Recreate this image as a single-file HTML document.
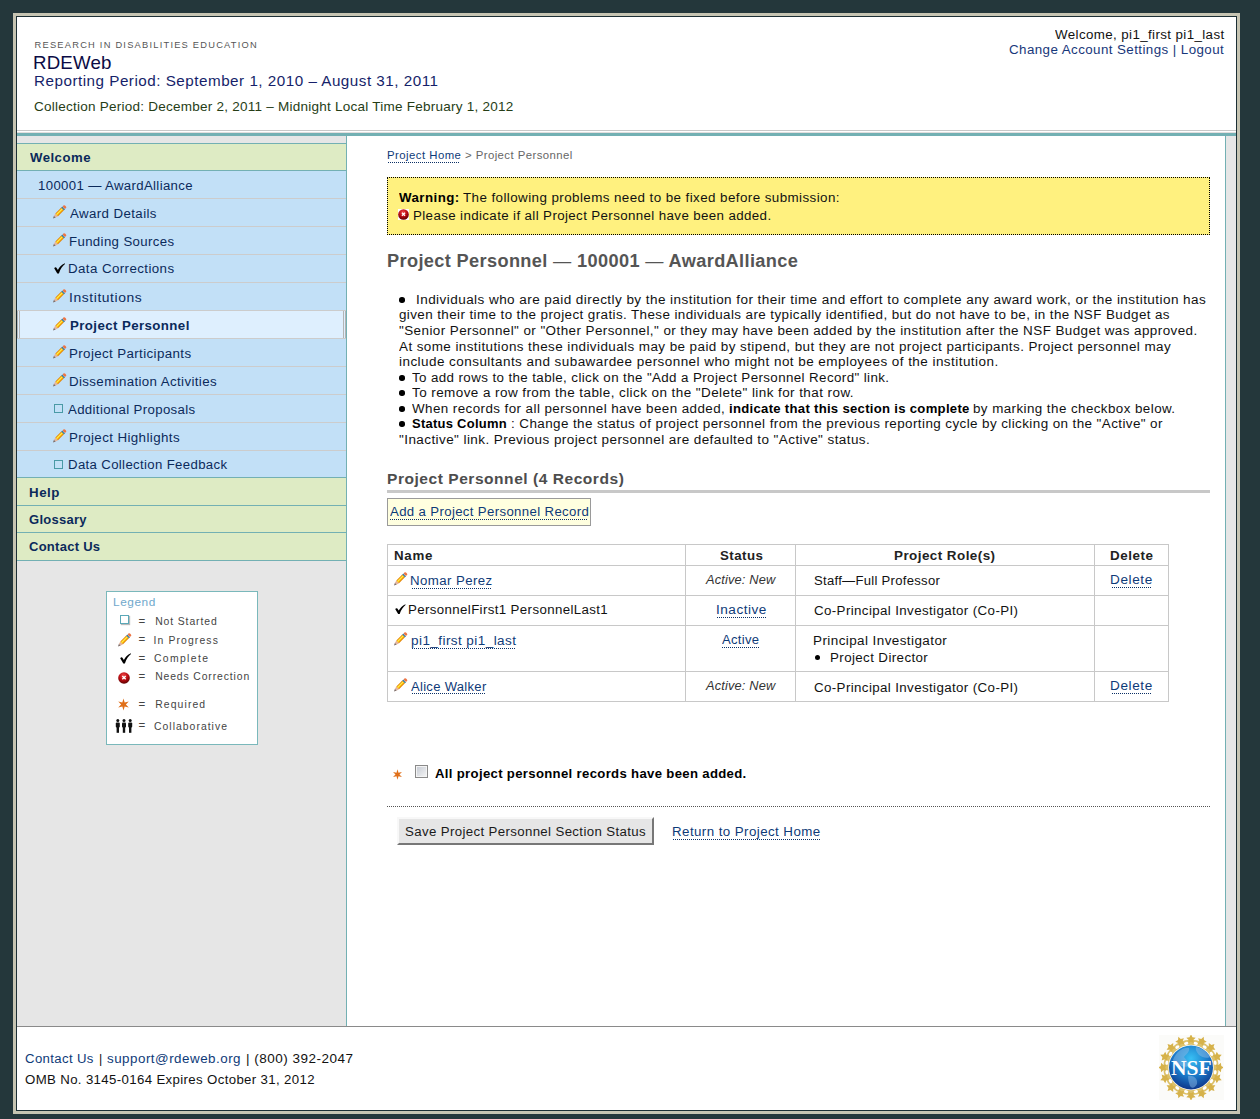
<!DOCTYPE html>
<html><head><meta charset="utf-8"><title>RDEWeb</title><style>html,body{margin:0;padding:0}
body{width:1260px;height:1119px;overflow:hidden;background:#24373b;position:relative;font-family:"Liberation Sans",sans-serif}
.a{position:absolute;box-sizing:content-box}
.t{position:absolute;white-space:nowrap;line-height:20px;transform-origin:0 0}
.ul{height:1px;background:repeating-linear-gradient(90deg,#0b3066 0 1px,transparent 1px 2px)}
</style></head><body>
<div class="a" style="left:13px;top:13px;width:1221px;height:1095px;border:3px solid #c6c4b2;box-sizing:content-box"></div>
<div class="a" style="left:16px;top:16px;width:1219px;height:1093px;border:1px solid #1c2f35;background:#fff"></div>
<div class="a" style="left:17px;top:130px;width:1219px;height:1px;background:#c8c8c8"></div>
<div class="a" style="left:17px;top:132px;width:1219px;height:1px;background:#e2dede"></div>
<div class="a" style="left:17px;top:133px;width:1219px;height:3px;background:#73b0b3"></div>
<div class="a" style="left:17px;top:136px;width:329px;height:890px;background:#e6e6e6"></div>
<div class="a" style="left:346px;top:136px;width:1px;height:890px;background:#73b0b3"></div>
<div class="a" style="left:1225px;top:136px;width:1px;height:890px;background:#73b0b3"></div>
<div class="a" style="left:1226px;top:136px;width:10px;height:890px;background:#e6e6e6"></div>
<div class="a" style="left:17px;top:143px;width:329px;height:1px;background:#73b0b3"></div>
<div class="a" style="left:17px;top:144px;width:329px;height:26px;background:#deebc4"></div>
<div class="a" style="left:17px;top:170px;width:329px;height:1px;background:#73b0b3"></div>
<div class="a" style="left:17px;top:171px;width:329px;height:306px;background:#c2e0f7"></div>
<div class="a" style="left:17px;top:198px;width:329px;height:1px;background:#cccccc"></div>
<div class="a" style="left:17px;top:226px;width:329px;height:1px;background:#cccccc"></div>
<div class="a" style="left:17px;top:254px;width:329px;height:1px;background:#cccccc"></div>
<div class="a" style="left:17px;top:282px;width:329px;height:1px;background:#cccccc"></div>
<div class="a" style="left:17px;top:310px;width:329px;height:1px;background:#cccccc"></div>
<div class="a" style="left:17px;top:338px;width:329px;height:1px;background:#cccccc"></div>
<div class="a" style="left:17px;top:366px;width:329px;height:1px;background:#cccccc"></div>
<div class="a" style="left:17px;top:394px;width:329px;height:1px;background:#cccccc"></div>
<div class="a" style="left:17px;top:422px;width:329px;height:1px;background:#cccccc"></div>
<div class="a" style="left:17px;top:450px;width:329px;height:1px;background:#cccccc"></div>
<div class="a" style="left:17px;top:477px;width:329px;height:1px;background:#73b0b3"></div>
<div class="a" style="left:17px;top:311px;width:329px;height:27px;background:#deeffe"></div>
<div class="a" style="left:17px;top:311px;width:1px;height:27px;background:#b4b4b4"></div>
<div class="a" style="left:19px;top:311px;width:1px;height:27px;background:#b4b4b4"></div>
<div class="a" style="left:343px;top:311px;width:1px;height:27px;background:#b4b4b4"></div>
<div class="a" style="left:345px;top:311px;width:1px;height:27px;background:#b4b4b4"></div>
<div class="a" style="left:17px;top:478px;width:329px;height:27px;background:#deebc4"></div>
<div class="a" style="left:17px;top:505px;width:329px;height:1px;background:#73b0b3"></div>
<div class="a" style="left:17px;top:506px;width:329px;height:26px;background:#deebc4"></div>
<div class="a" style="left:17px;top:532px;width:329px;height:1px;background:#73b0b3"></div>
<div class="a" style="left:17px;top:533px;width:329px;height:27px;background:#deebc4"></div>
<div class="a" style="left:17px;top:560px;width:329px;height:1px;background:#73b0b3"></div>
<div class="a" style="left:106px;top:591px;width:150px;height:152px;border:1px solid #7ab8bb;background:#fff"></div>
<div class="a" style="left:17px;top:1026px;width:1219px;height:1px;background:#8a8a8a"></div>
<div class="a" style="left:387px;top:177px;width:821px;height:56px;border:1px dotted #000;background:#fff17f"></div>
<div class="a" style="left:387px;top:490px;width:823px;height:3px;background:#c8c8c8"></div>
<div class="a" style="left:387px;top:498px;width:202px;height:26px;border:1px solid #9a9a9a;background:#ffffdf"></div>
<div class="a" style="left:387px;top:544px;width:782px;height:158px;border:0;background:#fff"></div>
<div class="a" style="left:387px;top:544px;width:782px;height:1px;background:#c8c8c8"></div>
<div class="a" style="left:387px;top:565px;width:782px;height:1px;background:#c8c8c8"></div>
<div class="a" style="left:387px;top:595px;width:782px;height:1px;background:#c8c8c8"></div>
<div class="a" style="left:387px;top:625px;width:782px;height:1px;background:#c8c8c8"></div>
<div class="a" style="left:387px;top:671px;width:782px;height:1px;background:#c8c8c8"></div>
<div class="a" style="left:387px;top:701px;width:782px;height:1px;background:#c8c8c8"></div>
<div class="a" style="left:387px;top:544px;width:1px;height:158px;background:#c8c8c8"></div>
<div class="a" style="left:685px;top:544px;width:1px;height:158px;background:#c8c8c8"></div>
<div class="a" style="left:795px;top:544px;width:1px;height:158px;background:#c8c8c8"></div>
<div class="a" style="left:1094px;top:544px;width:1px;height:158px;background:#c8c8c8"></div>
<div class="a" style="left:1168px;top:544px;width:1px;height:158px;background:#c8c8c8"></div>
<div class="a" style="left:387px;top:806px;width:823px;height:0px;border-top:1px dotted #555"></div>
<div class="a" style="left:397px;top:817px;width:253px;height:24px;border:2px solid;border-color:#f8f8f8 #777 #777 #f8f8f8;background:#e6e6e6"></div>
<svg class="a" style="left:51.3px;top:204.3px" width="16.5" height="16.5" viewBox="0 0 15 15"><g transform="rotate(-45 7.5 7.5)">
<polygon points="-0.6,7.5 1.9,6.3 1.9,8.7" fill="#7a6a66"/><polygon points="1.9,6.3 4.2,5.8 4.2,9.2 1.9,8.7" fill="#e6b49a"/>
<rect x="4.2" y="5.8" width="7.6" height="3.4" fill="#e2820c"/><rect x="4.2" y="6.5" width="7.6" height="1.9" fill="#ffc600"/><rect x="4.2" y="6.8" width="7.6" height="0.8" fill="#ffe95a"/>
<rect x="11.8" y="5.8" width="1.4" height="3.4" fill="#2f6f90"/><rect x="12.3" y="6.6" width="0.5" height="1.6" fill="#6fb0d0"/><rect x="13.2" y="5.8" width="2.3" height="3.4" rx="1.1" fill="#ee7444"/></g></svg>
<svg class="a" style="left:51.3px;top:232.3px" width="16.5" height="16.5" viewBox="0 0 15 15"><g transform="rotate(-45 7.5 7.5)">
<polygon points="-0.6,7.5 1.9,6.3 1.9,8.7" fill="#7a6a66"/><polygon points="1.9,6.3 4.2,5.8 4.2,9.2 1.9,8.7" fill="#e6b49a"/>
<rect x="4.2" y="5.8" width="7.6" height="3.4" fill="#e2820c"/><rect x="4.2" y="6.5" width="7.6" height="1.9" fill="#ffc600"/><rect x="4.2" y="6.8" width="7.6" height="0.8" fill="#ffe95a"/>
<rect x="11.8" y="5.8" width="1.4" height="3.4" fill="#2f6f90"/><rect x="12.3" y="6.6" width="0.5" height="1.6" fill="#6fb0d0"/><rect x="13.2" y="5.8" width="2.3" height="3.4" rx="1.1" fill="#ee7444"/></g></svg>
<svg class="a" style="left:53.5px;top:262.5px" width="11" height="11" viewBox="0 0 11 11"><path d="M0.2,5.3 C0.9,4.3 2.0,4.0 2.6,4.9 L3.9,6.9 C5.6,3.9 7.4,1.6 10.9,0.2 L11,1.1 C8.4,3.2 6.4,6.0 4.9,10.5 L3.3,10.5 Z" fill="#000"/></svg>
<svg class="a" style="left:51.3px;top:288.3px" width="16.5" height="16.5" viewBox="0 0 15 15"><g transform="rotate(-45 7.5 7.5)">
<polygon points="-0.6,7.5 1.9,6.3 1.9,8.7" fill="#7a6a66"/><polygon points="1.9,6.3 4.2,5.8 4.2,9.2 1.9,8.7" fill="#e6b49a"/>
<rect x="4.2" y="5.8" width="7.6" height="3.4" fill="#e2820c"/><rect x="4.2" y="6.5" width="7.6" height="1.9" fill="#ffc600"/><rect x="4.2" y="6.8" width="7.6" height="0.8" fill="#ffe95a"/>
<rect x="11.8" y="5.8" width="1.4" height="3.4" fill="#2f6f90"/><rect x="12.3" y="6.6" width="0.5" height="1.6" fill="#6fb0d0"/><rect x="13.2" y="5.8" width="2.3" height="3.4" rx="1.1" fill="#ee7444"/></g></svg>
<svg class="a" style="left:51.3px;top:316.3px" width="16.5" height="16.5" viewBox="0 0 15 15"><g transform="rotate(-45 7.5 7.5)">
<polygon points="-0.6,7.5 1.9,6.3 1.9,8.7" fill="#7a6a66"/><polygon points="1.9,6.3 4.2,5.8 4.2,9.2 1.9,8.7" fill="#e6b49a"/>
<rect x="4.2" y="5.8" width="7.6" height="3.4" fill="#e2820c"/><rect x="4.2" y="6.5" width="7.6" height="1.9" fill="#ffc600"/><rect x="4.2" y="6.8" width="7.6" height="0.8" fill="#ffe95a"/>
<rect x="11.8" y="5.8" width="1.4" height="3.4" fill="#2f6f90"/><rect x="12.3" y="6.6" width="0.5" height="1.6" fill="#6fb0d0"/><rect x="13.2" y="5.8" width="2.3" height="3.4" rx="1.1" fill="#ee7444"/></g></svg>
<svg class="a" style="left:51.3px;top:344.3px" width="16.5" height="16.5" viewBox="0 0 15 15"><g transform="rotate(-45 7.5 7.5)">
<polygon points="-0.6,7.5 1.9,6.3 1.9,8.7" fill="#7a6a66"/><polygon points="1.9,6.3 4.2,5.8 4.2,9.2 1.9,8.7" fill="#e6b49a"/>
<rect x="4.2" y="5.8" width="7.6" height="3.4" fill="#e2820c"/><rect x="4.2" y="6.5" width="7.6" height="1.9" fill="#ffc600"/><rect x="4.2" y="6.8" width="7.6" height="0.8" fill="#ffe95a"/>
<rect x="11.8" y="5.8" width="1.4" height="3.4" fill="#2f6f90"/><rect x="12.3" y="6.6" width="0.5" height="1.6" fill="#6fb0d0"/><rect x="13.2" y="5.8" width="2.3" height="3.4" rx="1.1" fill="#ee7444"/></g></svg>
<svg class="a" style="left:51.3px;top:372.3px" width="16.5" height="16.5" viewBox="0 0 15 15"><g transform="rotate(-45 7.5 7.5)">
<polygon points="-0.6,7.5 1.9,6.3 1.9,8.7" fill="#7a6a66"/><polygon points="1.9,6.3 4.2,5.8 4.2,9.2 1.9,8.7" fill="#e6b49a"/>
<rect x="4.2" y="5.8" width="7.6" height="3.4" fill="#e2820c"/><rect x="4.2" y="6.5" width="7.6" height="1.9" fill="#ffc600"/><rect x="4.2" y="6.8" width="7.6" height="0.8" fill="#ffe95a"/>
<rect x="11.8" y="5.8" width="1.4" height="3.4" fill="#2f6f90"/><rect x="12.3" y="6.6" width="0.5" height="1.6" fill="#6fb0d0"/><rect x="13.2" y="5.8" width="2.3" height="3.4" rx="1.1" fill="#ee7444"/></g></svg>
<div class="a" style="left:54px;top:406px;width:0px;height:0px;"></div>
<div class="a" style="left:54px;top:404px;width:7px;height:7px;border:1px solid #4a9aa6"></div>
<svg class="a" style="left:51.3px;top:428.3px" width="16.5" height="16.5" viewBox="0 0 15 15"><g transform="rotate(-45 7.5 7.5)">
<polygon points="-0.6,7.5 1.9,6.3 1.9,8.7" fill="#7a6a66"/><polygon points="1.9,6.3 4.2,5.8 4.2,9.2 1.9,8.7" fill="#e6b49a"/>
<rect x="4.2" y="5.8" width="7.6" height="3.4" fill="#e2820c"/><rect x="4.2" y="6.5" width="7.6" height="1.9" fill="#ffc600"/><rect x="4.2" y="6.8" width="7.6" height="0.8" fill="#ffe95a"/>
<rect x="11.8" y="5.8" width="1.4" height="3.4" fill="#2f6f90"/><rect x="12.3" y="6.6" width="0.5" height="1.6" fill="#6fb0d0"/><rect x="13.2" y="5.8" width="2.3" height="3.4" rx="1.1" fill="#ee7444"/></g></svg>
<div class="a" style="left:54px;top:462px;width:0px;height:0px;"></div>
<div class="a" style="left:54px;top:460px;width:7px;height:7px;border:1px solid #4a9aa6"></div>
<div class="a" style="left:120px;top:615px;width:7px;height:7px;border:1px solid #5aa8b8;box-shadow:1px 1px 1px #bbb"></div>
<svg class="a" style="left:116.3px;top:632.3px" width="16.5" height="16.5" viewBox="0 0 15 15"><g transform="rotate(-45 7.5 7.5)">
<polygon points="-0.6,7.5 1.9,6.3 1.9,8.7" fill="#7a6a66"/><polygon points="1.9,6.3 4.2,5.8 4.2,9.2 1.9,8.7" fill="#e6b49a"/>
<rect x="4.2" y="5.8" width="7.6" height="3.4" fill="#e2820c"/><rect x="4.2" y="6.5" width="7.6" height="1.9" fill="#ffc600"/><rect x="4.2" y="6.8" width="7.6" height="0.8" fill="#ffe95a"/>
<rect x="11.8" y="5.8" width="1.4" height="3.4" fill="#2f6f90"/><rect x="12.3" y="6.6" width="0.5" height="1.6" fill="#6fb0d0"/><rect x="13.2" y="5.8" width="2.3" height="3.4" rx="1.1" fill="#ee7444"/></g></svg>
<svg class="a" style="left:119.5px;top:652.5px" width="11" height="11" viewBox="0 0 11 11"><path d="M0.2,5.3 C0.9,4.3 2.0,4.0 2.6,4.9 L3.9,6.9 C5.6,3.9 7.4,1.6 10.9,0.2 L11,1.1 C8.4,3.2 6.4,6.0 4.9,10.5 L3.3,10.5 Z" fill="#000"/></svg>
<svg class="a" style="left:117.5px;top:671.5px" width="12" height="12" viewBox="0 0 12 12"><defs><radialGradient id="rg1" cx="0.45" cy="0.3" r="0.7"><stop offset="0" stop-color="#f04848"/><stop offset="0.55" stop-color="#b80c12"/><stop offset="1" stop-color="#5a0000"/></radialGradient></defs>
<circle cx="6" cy="6" r="5.8" fill="url(#rg1)"/><path d="M4.3,4.1 L7.7,7.3 M7.7,4.1 L4.3,7.3" stroke="#fff" stroke-width="1.4" stroke-linecap="butt"/></svg>
<svg class="a" style="left:117.2px;top:698px" width="13" height="13" viewBox="0 0 12 12"><polygon points="6.00,0.40 7.10,4.09 10.85,3.20 8.20,6.00 10.85,8.80 7.10,7.91 6.00,11.60 4.90,7.91 1.15,8.80 3.80,6.00 1.15,3.20 4.90,4.09" fill="#e0701a"/></svg>
<svg class="a" style="left:115px;top:719px" width="18" height="14" viewBox="0 0 18 14"><circle cx="2.8" cy="1.6" r="1.5" fill="#111"/><rect x="0.7999999999999998" y="3.4" width="4" height="5.2" rx="1" fill="#111"/><rect x="1.5999999999999999" y="7" width="2.4" height="6.8" fill="#111"/><circle cx="9" cy="1.6" r="1.5" fill="#111"/><rect x="7" y="3.4" width="4" height="5.2" rx="1" fill="#111"/><rect x="7.8" y="7" width="2.4" height="6.8" fill="#111"/><circle cx="15.2" cy="1.6" r="1.5" fill="#111"/><rect x="13.2" y="3.4" width="4" height="5.2" rx="1" fill="#111"/><rect x="14.0" y="7" width="2.4" height="6.8" fill="#111"/></svg>
<div class="a" style="left:398px;top:209px;width:11px;height:11px;background:#fff"></div>
<svg class="a" style="left:398px;top:209px" width="11" height="11" viewBox="0 0 12 12"><defs><radialGradient id="rg2" cx="0.45" cy="0.3" r="0.7"><stop offset="0" stop-color="#f04848"/><stop offset="0.55" stop-color="#b80c12"/><stop offset="1" stop-color="#5a0000"/></radialGradient></defs>
<circle cx="6" cy="6" r="5.8" fill="url(#rg2)"/><path d="M4.3,4.1 L7.7,7.3 M7.7,4.1 L4.3,7.3" stroke="#fff" stroke-width="1.4" stroke-linecap="butt"/></svg>
<svg class="a" style="left:392.3px;top:571.3px" width="16.5" height="16.5" viewBox="0 0 15 15"><g transform="rotate(-45 7.5 7.5)">
<polygon points="-0.6,7.5 1.9,6.3 1.9,8.7" fill="#7a6a66"/><polygon points="1.9,6.3 4.2,5.8 4.2,9.2 1.9,8.7" fill="#e6b49a"/>
<rect x="4.2" y="5.8" width="7.6" height="3.4" fill="#e2820c"/><rect x="4.2" y="6.5" width="7.6" height="1.9" fill="#ffc600"/><rect x="4.2" y="6.8" width="7.6" height="0.8" fill="#ffe95a"/>
<rect x="11.8" y="5.8" width="1.4" height="3.4" fill="#2f6f90"/><rect x="12.3" y="6.6" width="0.5" height="1.6" fill="#6fb0d0"/><rect x="13.2" y="5.8" width="2.3" height="3.4" rx="1.1" fill="#ee7444"/></g></svg>
<svg class="a" style="left:395px;top:604px" width="10.5" height="10.5" viewBox="0 0 11 11"><path d="M0.2,5.3 C0.9,4.3 2.0,4.0 2.6,4.9 L3.9,6.9 C5.6,3.9 7.4,1.6 10.9,0.2 L11,1.1 C8.4,3.2 6.4,6.0 4.9,10.5 L3.3,10.5 Z" fill="#000"/></svg>
<svg class="a" style="left:392.3px;top:631.3px" width="16.5" height="16.5" viewBox="0 0 15 15"><g transform="rotate(-45 7.5 7.5)">
<polygon points="-0.6,7.5 1.9,6.3 1.9,8.7" fill="#7a6a66"/><polygon points="1.9,6.3 4.2,5.8 4.2,9.2 1.9,8.7" fill="#e6b49a"/>
<rect x="4.2" y="5.8" width="7.6" height="3.4" fill="#e2820c"/><rect x="4.2" y="6.5" width="7.6" height="1.9" fill="#ffc600"/><rect x="4.2" y="6.8" width="7.6" height="0.8" fill="#ffe95a"/>
<rect x="11.8" y="5.8" width="1.4" height="3.4" fill="#2f6f90"/><rect x="12.3" y="6.6" width="0.5" height="1.6" fill="#6fb0d0"/><rect x="13.2" y="5.8" width="2.3" height="3.4" rx="1.1" fill="#ee7444"/></g></svg>
<svg class="a" style="left:392.3px;top:677.3px" width="16.5" height="16.5" viewBox="0 0 15 15"><g transform="rotate(-45 7.5 7.5)">
<polygon points="-0.6,7.5 1.9,6.3 1.9,8.7" fill="#7a6a66"/><polygon points="1.9,6.3 4.2,5.8 4.2,9.2 1.9,8.7" fill="#e6b49a"/>
<rect x="4.2" y="5.8" width="7.6" height="3.4" fill="#e2820c"/><rect x="4.2" y="6.5" width="7.6" height="1.9" fill="#ffc600"/><rect x="4.2" y="6.8" width="7.6" height="0.8" fill="#ffe95a"/>
<rect x="11.8" y="5.8" width="1.4" height="3.4" fill="#2f6f90"/><rect x="12.3" y="6.6" width="0.5" height="1.6" fill="#6fb0d0"/><rect x="13.2" y="5.8" width="2.3" height="3.4" rx="1.1" fill="#ee7444"/></g></svg>
<div class="a" style="left:814.5px;top:654.5px;width:5px;height:5px;background:#000;border-radius:50%"></div>
<div class="a" style="left:399.1px;top:297.05px;width:5.5px;height:5.5px;background:#000;border-radius:50%"></div>
<div class="a" style="left:399.1px;top:375.05px;width:5.5px;height:5.5px;background:#000;border-radius:50%"></div>
<div class="a" style="left:399.1px;top:390.05px;width:5.5px;height:5.5px;background:#000;border-radius:50%"></div>
<div class="a" style="left:399.1px;top:406.05px;width:5.5px;height:5.5px;background:#000;border-radius:50%"></div>
<div class="a" style="left:399.1px;top:421.05px;width:5.5px;height:5.5px;background:#000;border-radius:50%"></div>
<svg class="a" style="left:391.7px;top:768.5px" width="11" height="11" viewBox="0 0 12 12"><polygon points="6.00,0.40 7.10,4.09 10.85,3.20 8.20,6.00 10.85,8.80 7.10,7.91 6.00,11.60 4.90,7.91 1.15,8.80 3.80,6.00 1.15,3.20 4.90,4.09" fill="#e0701a"/></svg>
<div class="a" style="left:415px;top:765px;width:11px;height:11px;border:1px solid #8a8a8a;box-shadow:inset 0 0 0 1px #f4f4f4;background:linear-gradient(135deg,#c4c9d2,#f6f6f6)"></div>
<div class="a" style="left:1159px;top:1035px;width:65px;height:65px;background:#fbfbf9"></div><svg class="a" style="left:1159px;top:1035px" width="64" height="65" viewBox="0 0 64 65">
<defs><radialGradient id="globe" cx="0.5" cy="0.3" r="0.75"><stop offset="0" stop-color="#38c0f4"/><stop offset="0.55" stop-color="#1a76c6"/><stop offset="1" stop-color="#0b2c80"/></radialGradient></defs>
<circle cx="32" cy="32.5" r="25.2" fill="none" stroke="#dcc16a" stroke-width="5"/>
<polygon points="32.00,-0.70 33.47,2.18 36.66,2.69 34.38,4.97 34.88,8.16 32.00,6.70 29.12,8.16 29.62,4.97 27.34,2.69 30.53,2.18" fill="#d6b24a"/><polygon points="44.71,1.83 44.96,5.05 47.71,6.74 44.73,7.98 43.97,11.12 41.87,8.66 38.65,8.91 40.34,6.16 39.10,3.17 42.25,3.92" fill="#d6b24a"/><polygon points="55.48,9.02 54.48,12.10 56.38,14.71 53.15,14.72 51.24,17.33 50.24,14.26 47.17,13.26 49.78,11.35 49.79,8.12 52.40,10.02" fill="#d6b24a"/><polygon points="62.67,19.79 60.58,22.25 61.33,25.40 58.34,24.16 55.59,25.85 55.84,22.63 53.38,20.53 56.52,19.77 57.76,16.79 59.45,19.54" fill="#d6b24a"/><polygon points="65.20,32.50 62.32,33.97 61.81,37.16 59.53,34.88 56.34,35.38 57.80,32.50 56.34,29.62 59.53,30.12 61.81,27.84 62.32,31.03" fill="#d6b24a"/><polygon points="62.67,45.21 59.45,45.46 57.76,48.21 56.52,45.23 53.38,44.47 55.84,42.37 55.59,39.15 58.34,40.84 61.33,39.60 60.58,42.75" fill="#d6b24a"/><polygon points="55.48,55.98 52.40,54.98 49.79,56.88 49.78,53.65 47.17,51.74 50.24,50.74 51.24,47.67 53.15,50.28 56.38,50.29 54.48,52.90" fill="#d6b24a"/><polygon points="44.71,63.17 42.25,61.08 39.10,61.83 40.34,58.84 38.65,56.09 41.87,56.34 43.97,53.88 44.73,57.02 47.71,58.26 44.96,59.95" fill="#d6b24a"/><polygon points="32.00,65.70 30.53,62.82 27.34,62.31 29.62,60.03 29.12,56.84 32.00,58.30 34.88,56.84 34.38,60.03 36.66,62.31 33.47,62.82" fill="#d6b24a"/><polygon points="19.29,63.17 19.04,59.95 16.29,58.26 19.27,57.02 20.03,53.88 22.13,56.34 25.35,56.09 23.66,58.84 24.90,61.83 21.75,61.08" fill="#d6b24a"/><polygon points="8.52,55.98 9.52,52.90 7.62,50.29 10.85,50.28 12.76,47.67 13.76,50.74 16.83,51.74 14.22,53.65 14.21,56.88 11.60,54.98" fill="#d6b24a"/><polygon points="1.33,45.21 3.42,42.75 2.67,39.60 5.66,40.84 8.41,39.15 8.16,42.37 10.62,44.47 7.48,45.23 6.24,48.21 4.55,45.46" fill="#d6b24a"/><polygon points="-1.20,32.50 1.68,31.03 2.19,27.84 4.47,30.12 7.66,29.62 6.20,32.50 7.66,35.38 4.47,34.88 2.19,37.16 1.68,33.97" fill="#d6b24a"/><polygon points="1.33,19.79 4.55,19.54 6.24,16.79 7.48,19.77 10.62,20.53 8.16,22.63 8.41,25.85 5.66,24.16 2.67,25.40 3.42,22.25" fill="#d6b24a"/><polygon points="8.52,9.02 11.60,10.02 14.21,8.12 14.22,11.35 16.83,13.26 13.76,14.26 12.76,17.33 10.85,14.72 7.62,14.71 9.52,12.10" fill="#d6b24a"/><polygon points="19.29,1.83 21.75,3.92 24.90,3.17 23.66,6.16 25.35,8.91 22.13,8.66 20.03,11.12 19.27,7.98 16.29,6.74 19.04,5.05" fill="#d6b24a"/>
<ellipse cx="36.80" cy="8.37" rx="2.2" ry="1.5" transform="rotate(11.2 36.80 8.37)" fill="#fff"/><ellipse cx="45.67" cy="12.05" rx="2.2" ry="1.5" transform="rotate(33.8 45.67 12.05)" fill="#fff"/><ellipse cx="52.45" cy="18.83" rx="2.2" ry="1.5" transform="rotate(56.2 52.45 18.83)" fill="#fff"/><ellipse cx="56.13" cy="27.70" rx="2.2" ry="1.5" transform="rotate(78.8 56.13 27.70)" fill="#fff"/><ellipse cx="56.13" cy="37.30" rx="2.2" ry="1.5" transform="rotate(101.2 56.13 37.30)" fill="#fff"/><ellipse cx="52.45" cy="46.17" rx="2.2" ry="1.5" transform="rotate(123.7 52.45 46.17)" fill="#fff"/><ellipse cx="45.67" cy="52.95" rx="2.2" ry="1.5" transform="rotate(146.2 45.67 52.95)" fill="#fff"/><ellipse cx="36.80" cy="56.63" rx="2.2" ry="1.5" transform="rotate(168.8 36.80 56.63)" fill="#fff"/><ellipse cx="27.20" cy="56.63" rx="2.2" ry="1.5" transform="rotate(191.2 27.20 56.63)" fill="#fff"/><ellipse cx="18.33" cy="52.95" rx="2.2" ry="1.5" transform="rotate(213.8 18.33 52.95)" fill="#fff"/><ellipse cx="11.55" cy="46.17" rx="2.2" ry="1.5" transform="rotate(236.2 11.55 46.17)" fill="#fff"/><ellipse cx="7.87" cy="37.30" rx="2.2" ry="1.5" transform="rotate(258.8 7.87 37.30)" fill="#fff"/><ellipse cx="7.87" cy="27.70" rx="2.2" ry="1.5" transform="rotate(281.2 7.87 27.70)" fill="#fff"/><ellipse cx="11.55" cy="18.83" rx="2.2" ry="1.5" transform="rotate(303.8 11.55 18.83)" fill="#fff"/><ellipse cx="18.33" cy="12.05" rx="2.2" ry="1.5" transform="rotate(326.2 18.33 12.05)" fill="#fff"/><ellipse cx="27.20" cy="8.37" rx="2.2" ry="1.5" transform="rotate(348.8 27.20 8.37)" fill="#fff"/>
<circle cx="32" cy="32.5" r="22" fill="url(#globe)"/>
<path d="M14,25 C17,17 24,12 30,13 C31,17 27,19 25,22 C27,25 30,27 29,31 C26,33 22,31 20,29 C17,29 15,28 14,25 Z M37,12 C43,13 48,17 51,22 C47,24 43,22 40,20 C38,17 36,15 37,12 Z M29,41 C34,40 39,43 38,49 C36,53 33,54 31,51 C30,48 29,45 29,41 Z" fill="#8ab8e4" opacity="0.5"/>
<text x="32.3" y="40" text-anchor="middle" font-family="Liberation Serif" font-weight="bold" font-size="21.5" fill="#fff">NSF</text>
</svg>
<div class="t" id="h1" style="left:34.54px;top:35.00px;font-size:9.3px;color:#555;letter-spacing:1.229px">RESEARCH IN DISABILITIES EDUCATION</div>
<div class="t" id="h2" style="left:33.47px;top:53.01px;font-size:18.5px;color:#0b0b45;letter-spacing:0.151px;transform:scaleX(1.0103)">RDEWeb</div>
<div class="t" id="h3" style="left:33.75px;top:71.00px;font-size:14.2px;color:#161f6a;letter-spacing:0.462px;transform:scaleX(1.0735)">Reporting Period: September 1, 2010 – August 31, 2011</div>
<div class="t" id="h4" style="left:34.31px;top:97.00px;font-size:13px;color:#263d16;letter-spacing:0.231px;transform:scaleX(1.0397)">Collection Period: December 2, 2011 – Midnight Local Time February 1, 2012</div>
<div class="t" id="h5" style="left:1054.94px;top:25.01px;font-size:12.5px;color:#111;letter-spacing:0.361px;transform:scaleX(1.0671)">Welcome, pi1_first pi1_last</div>
<div class="t" id="h6" style="left:1009.32px;top:40.01px;font-size:12.5px;color:#17377a;letter-spacing:0.391px;transform:scaleX(1.0689)">Change Account Settings | Logout</div>
<div class="t" id="s0" style="left:29.99px;top:148.01px;font-size:12.5px;color:#0b2a5b;letter-spacing:0.457px;transform:scaleX(1.0533);font-weight:bold">Welcome</div>
<div class="t" id="s1" style="left:38.00px;top:176.01px;font-size:12.5px;color:#0b2a5b;letter-spacing:0.340px;transform:scaleX(1.0545)">100001 — AwardAlliance</div>
<div class="t" id="s2" style="left:69.97px;top:204.01px;font-size:12.5px;color:#0b2a5b;letter-spacing:0.376px;transform:scaleX(1.0627)">Award Details</div>
<div class="t" id="s3" style="left:68.92px;top:232.01px;font-size:12.5px;color:#0b2a5b;letter-spacing:0.354px;transform:scaleX(1.0563)">Funding Sources</div>
<div class="t" id="s4" style="left:67.91px;top:259.01px;font-size:12.5px;color:#0b2a5b;letter-spacing:0.381px;transform:scaleX(1.0660)">Data Corrections</div>
<div class="t" id="s5" style="left:69.22px;top:288.01px;font-size:12.5px;color:#0b2a5b;letter-spacing:0.526px;transform:scaleX(1.1104)">Institutions</div>
<div class="t" id="s6" style="left:69.61px;top:316.01px;font-size:12.5px;color:#0b2a5b;letter-spacing:0.381px;transform:scaleX(1.0618);font-weight:bold">Project Personnel</div>
<div class="t" id="s7" style="left:69.41px;top:344.01px;font-size:12.5px;color:#0b2a5b;letter-spacing:0.352px;transform:scaleX(1.0672)">Project Participants</div>
<div class="t" id="s8" style="left:69.41px;top:372.01px;font-size:12.5px;color:#0b2a5b;letter-spacing:0.344px;transform:scaleX(1.0653)">Dissemination Activities</div>
<div class="t" id="s9" style="left:68.27px;top:400.01px;font-size:12.5px;color:#0b2a5b;letter-spacing:0.328px;transform:scaleX(1.0582)">Additional Proposals</div>
<div class="t" id="s10" style="left:69.40px;top:428.01px;font-size:12.5px;color:#0b2a5b;letter-spacing:0.363px;transform:scaleX(1.0689)">Project Highlights</div>
<div class="t" id="s11" style="left:67.92px;top:455.01px;font-size:12.5px;color:#0b2a5b;letter-spacing:0.327px;transform:scaleX(1.0558)">Data Collection Feedback</div>
<div class="t" id="s12" style="left:29.11px;top:483.01px;font-size:12.5px;color:#0b2a5b;letter-spacing:0.510px;transform:scaleX(1.0632);font-weight:bold">Help</div>
<div class="t" id="s13" style="left:29.47px;top:510.01px;font-size:12.5px;color:#0b2a5b;letter-spacing:0.280px;transform:scaleX(1.0384);font-weight:bold">Glossary</div>
<div class="t" id="s14" style="left:29.47px;top:537.01px;font-size:12.5px;color:#0b2a5b;letter-spacing:0.270px;transform:scaleX(1.0388);font-weight:bold">Contact Us</div>
<div class="t" id="l0" style="left:112.53px;top:592.00px;font-size:11px;color:#6fa8cc;letter-spacing:0.502px;transform:scaleX(1.0770)">Legend</div>
<div class="t" id="l1" style="left:155.15px;top:612.00px;font-size:10.4px;color:#444;letter-spacing:0.896px">Not Started</div>
<div class="t" id="le1" style="left:138.44px;top:610.50px;font-size:11.5px;color:#444;letter-spacing:0.000px">=</div>
<div class="t" id="l2" style="left:153.54px;top:630.50px;font-size:10.4px;color:#444;letter-spacing:1.119px">In Progress</div>
<div class="t" id="le2" style="left:138.44px;top:629.00px;font-size:11.5px;color:#444;letter-spacing:0.000px">=</div>
<div class="t" id="l3" style="left:153.97px;top:649.00px;font-size:10.4px;color:#444;letter-spacing:1.359px">Complete</div>
<div class="t" id="le3" style="left:138.44px;top:647.50px;font-size:11.5px;color:#444;letter-spacing:0.000px">=</div>
<div class="t" id="l4" style="left:155.15px;top:667.00px;font-size:10.4px;color:#444;letter-spacing:0.878px">Needs Correction</div>
<div class="t" id="le4" style="left:138.44px;top:665.50px;font-size:11.5px;color:#444;letter-spacing:0.000px">=</div>
<div class="t" id="l5" style="left:155.15px;top:695.00px;font-size:10.4px;color:#444;letter-spacing:1.120px">Required</div>
<div class="t" id="le5" style="left:138.44px;top:693.50px;font-size:11.5px;color:#444;letter-spacing:0.000px">=</div>
<div class="t" id="l6" style="left:153.97px;top:716.50px;font-size:10.4px;color:#444;letter-spacing:1.028px">Collaborative</div>
<div class="t" id="le6" style="left:138.44px;top:715.00px;font-size:11.5px;color:#444;letter-spacing:0.000px">=</div>
<div class="t" id="b1" style="left:387.07px;top:145.00px;font-size:10.5px;color:#0e3a78;letter-spacing:0.429px;transform:scaleX(1.0820)">Project Home</div><div class="a ul" style="left:388px;top:162px;width:72px"></div>
<div class="t" id="b2" style="left:465.44px;top:145.00px;font-size:10.5px;color:#666;letter-spacing:0.392px;transform:scaleX(1.0843)">&gt; Project Personnel</div>
<div class="t" id="w1" style="left:398.99px;top:188.01px;font-size:12.5px;color:#000;letter-spacing:0.438px;transform:scaleX(1.0621);font-weight:bold">Warning:</div>
<div class="t" id="w2" style="left:462.70px;top:188.01px;font-size:12.5px;color:#111;letter-spacing:0.385px;transform:scaleX(1.0718)">The following problems need to be fixed before submission:</div>
<div class="t" id="w3" style="left:413.11px;top:206.01px;font-size:12.5px;color:#111;letter-spacing:0.350px;transform:scaleX(1.0665)">Please indicate if all Project Personnel have been added.</div>
<div class="t" id="hd" style="left:386.78px;top:250.50px;font-size:17.5px;color:#555;letter-spacing:0.346px;transform:scaleX(1.0388);font-weight:bold">Project Personnel <span style="font-weight:normal">—</span> 100001 <span style="font-weight:normal">—</span> AwardAlliance</div>
<div class="t" id="p1" style="left:415.75px;top:290.01px;font-size:12.5px;color:#111;letter-spacing:0.403px;transform:scaleX(1.0826)">Individuals who are paid directly by the institution for their time and effort to complete any award work, or the institution has</div>
<div class="t" id="p2" style="left:398.94px;top:305.01px;font-size:12.5px;color:#111;letter-spacing:0.368px;transform:scaleX(1.0742)">given their time to the project gratis. These individuals are typically identified, but do not have to be, in the NSF Budget as</div>
<div class="t" id="p3" style="left:398.93px;top:321.01px;font-size:12.5px;color:#111;letter-spacing:0.398px;transform:scaleX(1.0748)">&quot;Senior Personnel&quot; or &quot;Other Personnel,&quot; or they may have been added by the institution after the NSF Budget was approved.</div>
<div class="t" id="p4" style="left:399.47px;top:337.01px;font-size:12.5px;color:#111;letter-spacing:0.388px;transform:scaleX(1.0760)">At some institutions these individuals may be paid by stipend, but they are not project participants. Project personnel may</div>
<div class="t" id="p5" style="left:398.60px;top:352.01px;font-size:12.5px;color:#111;letter-spacing:0.419px;transform:scaleX(1.0788)">include consultants and subawardee personnel who might not be employees of the institution.</div>
<div class="t" id="p6" style="left:412.20px;top:368.01px;font-size:12.5px;color:#111;letter-spacing:0.357px;transform:scaleX(1.0696)">To add rows to the table, click on the &quot;Add a Project Personnel Record&quot; link.</div>
<div class="t" id="p7" style="left:412.20px;top:383.01px;font-size:12.5px;color:#111;letter-spacing:0.393px;transform:scaleX(1.0792)">To remove a row from the table, click on the &quot;Delete&quot; link for that row.</div>
<div class="t" id="p8a" style="left:412.44px;top:399.01px;font-size:12.5px;color:#111;letter-spacing:0.395px;transform:scaleX(1.0713)">When records for all personnel have been added,</div>
<div class="t" id="p8b" style="left:728.58px;top:399.01px;font-size:12.5px;color:#000;letter-spacing:0.277px;transform:scaleX(1.0494);font-weight:bold">indicate that this section is complete</div>
<div class="t" id="p8c" style="left:973.14px;top:399.01px;font-size:12.5px;color:#111;letter-spacing:0.399px;transform:scaleX(1.0706)">by marking the checkbox below.</div>
<div class="t" id="p9a" style="left:412.13px;top:414.01px;font-size:12.5px;color:#000;letter-spacing:0.258px;transform:scaleX(1.0369);font-weight:bold">Status Column</div>
<div class="t" id="p9b" style="left:510.77px;top:414.01px;font-size:12.5px;color:#111;letter-spacing:0.378px;transform:scaleX(1.0748)">: Change the status of project personnel from the previous reporting cycle by clicking on the &quot;Active&quot; or</div>
<div class="t" id="p10" style="left:399.43px;top:430.01px;font-size:12.5px;color:#111;letter-spacing:0.393px;transform:scaleX(1.0797)">&quot;Inactive&quot; link. Previous project personnel are defaulted to &quot;Active&quot; status.</div>
<div class="t" id="rc" style="left:386.96px;top:469.01px;font-size:14.5px;color:#4d4d4d;letter-spacing:0.493px;transform:scaleX(1.0721);font-weight:bold">Project Personnel (4 Records)</div>
<div class="t" id="ad" style="left:389.97px;top:502.01px;font-size:12.5px;color:#0e3a78;letter-spacing:0.330px;transform:scaleX(1.0569)">Add a Project Personnel Record</div><div class="a ul" style="left:390px;top:519px;width:198px"></div>
<div class="t" id="th1" style="left:394.11px;top:546.01px;font-size:12.5px;color:#222;letter-spacing:0.660px;transform:scaleX(1.0643);font-weight:bold">Name</div>
<div class="t" id="th2" style="left:719.62px;top:546.01px;font-size:12.5px;color:#222;letter-spacing:0.438px;transform:scaleX(1.0624);font-weight:bold">Status</div>
<div class="t" id="th3" style="left:894.10px;top:546.01px;font-size:12.5px;color:#222;letter-spacing:0.424px;transform:scaleX(1.0734);font-weight:bold">Project Role(s)</div>
<div class="t" id="th4" style="left:1110.10px;top:546.01px;font-size:12.5px;color:#222;letter-spacing:0.489px;transform:scaleX(1.0723);font-weight:bold">Delete</div>
<div class="t" id="r1a" style="left:410.41px;top:571.01px;font-size:12.5px;color:#0e3a78;letter-spacing:0.402px;transform:scaleX(1.0591)">Nomar Perez</div><div class="a ul" style="left:412px;top:588px;width:80px"></div>
<div class="t" id="r1b" style="left:705.63px;top:570.01px;font-size:12.5px;color:#333;letter-spacing:0.157px;transform:scaleX(1.0239);font-style:italic">Active: New</div>
<div class="t" id="r1c" style="left:813.91px;top:571.01px;font-size:12.5px;color:#111;letter-spacing:0.269px;transform:scaleX(1.0467)">Staff—Full Professor</div>
<div class="t" id="r1d" style="left:1110.39px;top:570.01px;font-size:12.5px;color:#0e3a78;letter-spacing:0.547px;transform:scaleX(1.0860)">Delete</div><div class="a ul" style="left:1112px;top:587px;width:40px"></div>
<div class="t" id="r2a" style="left:408.41px;top:600.01px;font-size:12.5px;color:#111;letter-spacing:0.353px;transform:scaleX(1.0617)">PersonnelFirst1 PersonnelLast1</div>
<div class="t" id="r2b" style="left:715.75px;top:600.01px;font-size:12.5px;color:#0e3a78;letter-spacing:0.468px;transform:scaleX(1.0860)">Inactive</div><div class="a ul" style="left:717px;top:617px;width:49px"></div>
<div class="t" id="r2c" style="left:813.82px;top:601.01px;font-size:12.5px;color:#111;letter-spacing:0.351px;transform:scaleX(1.0672)">Co-Principal Investigator (Co-PI)</div>
<div class="t" id="r3a" style="left:410.63px;top:631.01px;font-size:12.5px;color:#0e3a78;letter-spacing:0.396px;transform:scaleX(1.0814)">pi1_first pi1_last</div><div class="a ul" style="left:412px;top:648px;width:104px"></div>
<div class="t" id="r3b" style="left:722.47px;top:630.01px;font-size:12.5px;color:#0e3a78;letter-spacing:0.291px;transform:scaleX(1.0454)">Active</div><div class="a ul" style="left:722px;top:647px;width:37px"></div>
<div class="t" id="r3c" style="left:813.40px;top:631.01px;font-size:12.5px;color:#111;letter-spacing:0.391px;transform:scaleX(1.0771)">Principal Investigator</div>
<div class="t" id="r3d" style="left:829.90px;top:648.01px;font-size:12.5px;color:#111;letter-spacing:0.362px;transform:scaleX(1.0682)">Project Director</div>
<div class="t" id="r4a" style="left:411.47px;top:676.51px;font-size:12.5px;color:#0e3a78;letter-spacing:0.271px;transform:scaleX(1.0453)">Alice Walker</div><div class="a ul" style="left:412px;top:693px;width:74px"></div>
<div class="t" id="r4b" style="left:705.63px;top:676.01px;font-size:12.5px;color:#333;letter-spacing:0.157px;transform:scaleX(1.0239);font-style:italic">Active: New</div>
<div class="t" id="r4c" style="left:813.82px;top:678.01px;font-size:12.5px;color:#111;letter-spacing:0.351px;transform:scaleX(1.0672)">Co-Principal Investigator (Co-PI)</div>
<div class="t" id="r4d" style="left:1110.39px;top:676.01px;font-size:12.5px;color:#0e3a78;letter-spacing:0.547px;transform:scaleX(1.0860)">Delete</div><div class="a ul" style="left:1112px;top:693px;width:40px"></div>
<div class="t" id="cb" style="left:434.67px;top:764.01px;font-size:12.5px;color:#000;letter-spacing:0.308px;transform:scaleX(1.0519);font-weight:bold">All project personnel records have been added.</div>
<div class="t" id="bt" style="left:404.90px;top:822.01px;font-size:12.5px;color:#1a1a1a;letter-spacing:0.338px;transform:scaleX(1.0604)">Save Project Personnel Section Status</div>
<div class="t" id="rt" style="left:671.90px;top:822.01px;font-size:12.5px;color:#0e3a78;letter-spacing:0.390px;transform:scaleX(1.0677)">Return to Project Home</div><div class="a ul" style="left:673px;top:839px;width:147px"></div>
<div class="t" id="f1" style="left:25.03px;top:1049.01px;font-size:12.5px;color:#0e3a78;letter-spacing:0.346px;transform:scaleX(1.0540)">Contact Us</div>
<div class="t" id="f2" style="left:98.88px;top:1049.01px;font-size:12.5px;color:#111;letter-spacing:0.000px">|</div>
<div class="t" id="f3" style="left:107.33px;top:1049.01px;font-size:12.5px;color:#0e3a78;letter-spacing:0.454px;transform:scaleX(1.0714)">support@rdeweb.org</div>
<div class="t" id="f4" style="left:245.79px;top:1049.01px;font-size:12.5px;color:#111;letter-spacing:0.449px;transform:scaleX(1.0804)">| (800) 392-2047</div>
<div class="t" id="f5" style="left:25.07px;top:1070.01px;font-size:12.5px;color:#111;letter-spacing:0.342px;transform:scaleX(1.0573)">OMB No. 3145-0164 Expires October 31, 2012</div>
</body></html>
